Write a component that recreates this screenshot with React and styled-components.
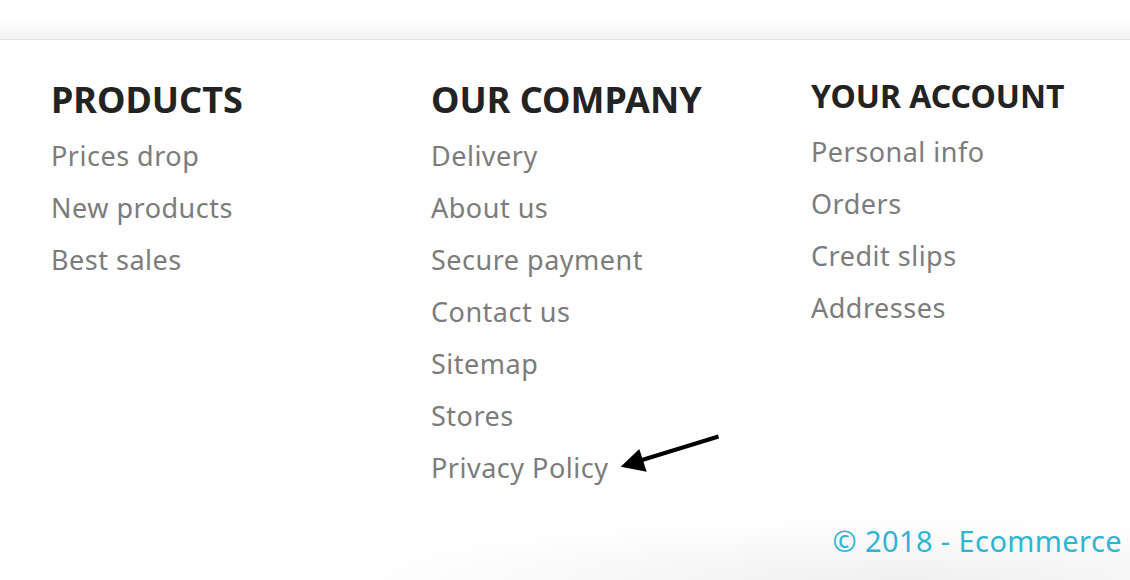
import React from 'react'
import styled, { createGlobalStyle } from 'styled-components'

const GlobalStyle = createGlobalStyle`
    body {
        margin: 0;
        background: #fff;
        font-family: "Noto Sans", "Open Sans", sans-serif;
    }
`

const Page = styled.div`
    position: relative;
    width: 1130px;
    height: 580px;
    overflow: hidden;
    background: #fff;
`

const TopBand = styled.div`
    height: 39px;
    background: linear-gradient(to bottom, #fff 50%, #f2f2f2 100%);
    border-bottom: 1px solid #e2e2e2;
`

const Footer = styled.footer`
    padding: 38px 0 7px 51px;
`

const Columns = styled.div`
    display: grid;
    grid-template-columns: 380px 380px 1fr;
`

const Column = styled.div`
    display: flex;
    flex-direction: column;
`

const Heading = styled.h4`
    margin: ${({ $small }) => ($small ? '-1px 0 11px' : '0 0 9px')};
    font-size: ${({ $small }) => ($small ? '32px' : '36px')};
    line-height: 1.2;
    font-weight: 700;
    color: #232323;
    text-transform: uppercase;
`

const List = styled.ul`
    list-style: none;
    margin: 0;
    padding: 0;
`

const Item = styled.li`
    font-size: 27px;
    letter-spacing: 0.5px;
    line-height: 52px;
    color: #7c7c7c;
`

const CopyrightBar = styled.div`
    height: 80px;
    box-sizing: border-box;
    padding: 20px 8px 0 0;
    text-align: right;
    background:
        radial-gradient(ellipse 800px 90px at 80% 100%, #f0f0f0 0%, rgba(255,255,255,0) 70%);
`

const Copyright = styled.span`
    font-size: 29px;
    letter-spacing: 0.4px;
    line-height: 40px;
    color: #2fb5d2;
`

const Arrow = styled.svg`
    position: absolute;
    left: 615px;
    top: 430px;
    width: 110px;
    height: 48px;
`

const columns = [
    { title: 'Products', links: ['Prices drop', 'New products', 'Best sales'] },
    {
        title: 'Our company',
        links: ['Delivery', 'About us', 'Secure payment', 'Contact us', 'Sitemap', 'Stores', 'Privacy Policy'],
    },
    { title: 'Your account', small: true, links: ['Personal info', 'Orders', 'Credit slips', 'Addresses'] },
]

export default function App() {
    return (
        <Page>
            <GlobalStyle />
            <TopBand />
            <Footer>
                <Columns>
                    {columns.map((col) => (
                        <Column key={col.title}>
                            <Heading $small={col.small}>{col.title}</Heading>
                            <List>
                                {col.links.map((l) => (
                                    <Item key={l}>{l}</Item>
                                ))}
                            </List>
                        </Column>
                    ))}
                </Columns>
            </Footer>
            <CopyrightBar>
                <Copyright>© 2018 - Ecommerce</Copyright>
            </CopyrightBar>
            <Arrow viewBox="0 0 110 48">
                <line x1="27" y1="30" x2="103.5" y2="6.5" stroke="#000" strokeWidth="4" />
                <polygon points="5.7,36.7 24.3,19 31.7,41.7" fill="#000" />
            </Arrow>
        </Page>
    )
}
